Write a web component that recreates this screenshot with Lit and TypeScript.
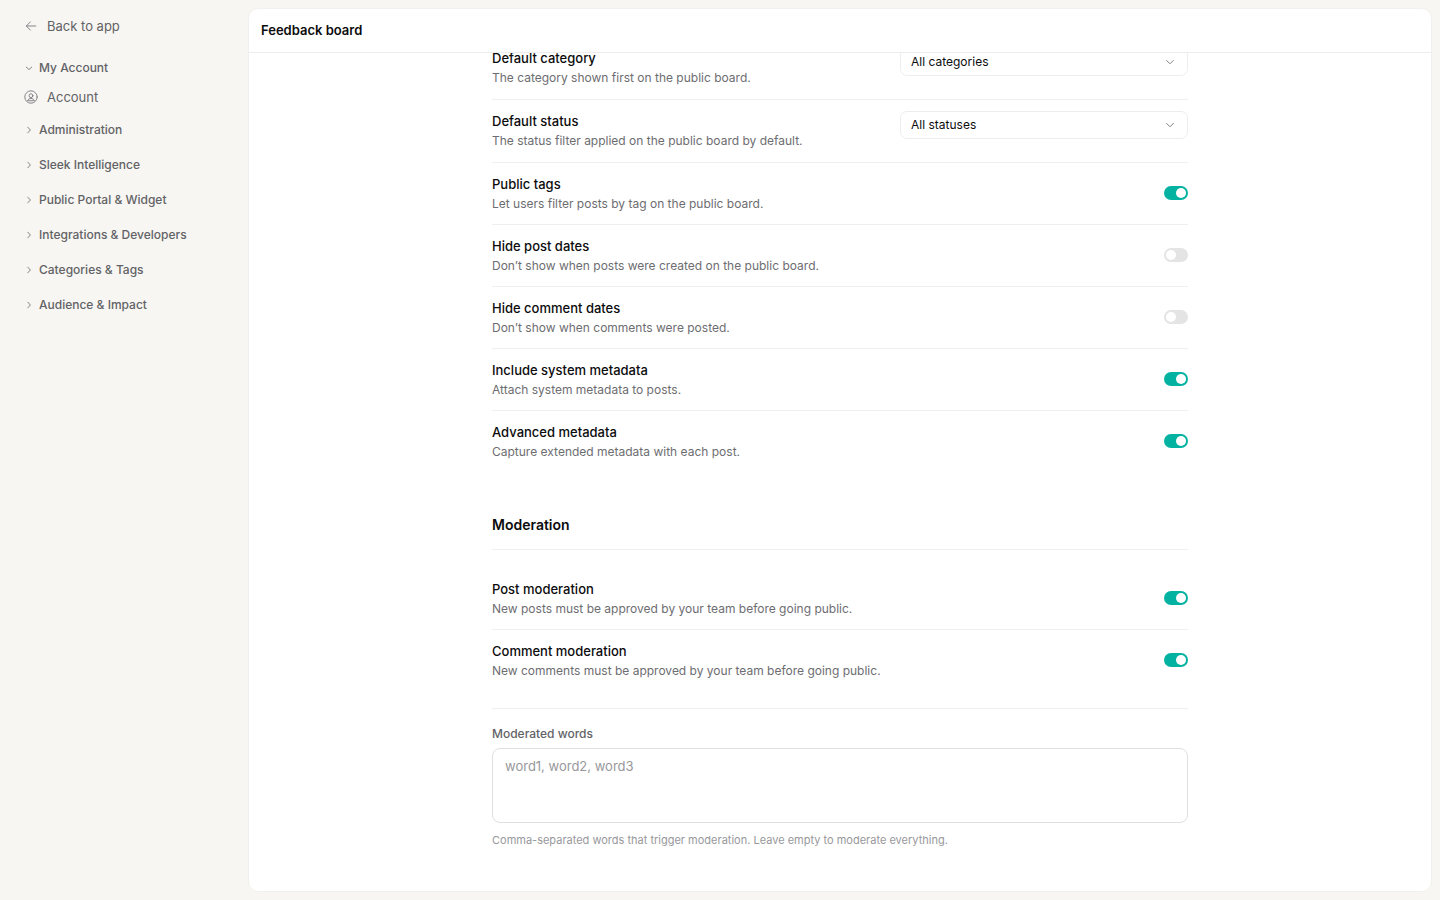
import { LitElement, html, svg, css } from "lit";
import { customElement, property, query } from "lit/decorators.js";

interface Setting {
  id: string;
  title: string;
  description: string;
  on?: boolean;
  option?: string;
}

const boardSettings: Setting[] = [
  { id: "category", title: "Default category", description: "The category shown first on the public board.", option: "All categories" },
  { id: "status", title: "Default status", description: "The status filter applied on the public board by default.", option: "All statuses" },
  { id: "tags", title: "Public tags", description: "Let users filter posts by tag on the public board.", on: true },
  { id: "post-dates", title: "Hide post dates", description: "Don’t show when posts were created on the public board.", on: false },
  { id: "comment-dates", title: "Hide comment dates", description: "Don’t show when comments were posted.", on: false },
  { id: "system-metadata", title: "Include system metadata", description: "Attach system metadata to posts.", on: true },
  { id: "advanced-metadata", title: "Advanced metadata", description: "Capture extended metadata with each post.", on: true },
];

const moderationSettings: Setting[] = [
  { id: "post-moderation", title: "Post moderation", description: "New posts must be approved by your team before going public.", on: true },
  { id: "comment-moderation", title: "Comment moderation", description: "New comments must be approved by your team before going public.", on: true },
];

const navGroups = [
  "Administration",
  "Sleek Intelligence",
  "Public Portal & Widget",
  "Integrations & Developers",
  "Categories & Tags",
  "Audience & Impact",
];

const chevronRight = svg`<path d="M3.8 2.2 6.4 5 3.8 7.8" />`;
const chevronDown = svg`<path d="M2.2 4 5 6.6 7.8 4" />`;

@customElement("settings-nav")
export class SettingsNav extends LitElement {
  static styles = css`
    :host {
      display: block;
      padding: 12px 16px;
      color: #626266;
    }
    .link,
    .group {
      display: flex;
      align-items: center;
      box-sizing: border-box;
      width: 100%;
      border: 0;
      padding: 0 8px;
      background: none;
      font-family: inherit;
      color: inherit;
      text-align: left;
      text-decoration: none;
    }
    .link {
      height: 28px;
      gap: 9px;
      font-size: 13px;
      line-height: 20px;
    }
    .group {
      height: 35px;
      gap: 5px;
      font-size: 12px;
      font-weight: 500;
      line-height: 16px;
    }
    .groups {
      display: flex;
      flex-direction: column;
      margin-top: 12px;
    }
    .group-open {
      height: 31px;
    }
    .items {
      padding-bottom: 1px;
    }
    svg {
      flex: none;
      fill: none;
      stroke: #858589;
      stroke-linecap: round;
      stroke-linejoin: round;
    }
  `;

  render() {
    return html`
      <a class="link" href="#app">
        <svg width="14" height="14" viewBox="0 0 14 14"><path d="M11.8 7H2.4M6.4 2.9 2.3 7l4.1 4.1" /></svg>
        Back to app
      </a>
      <div class="groups">
        <button class="group group-open" aria-expanded="true">
          <svg width="10" height="10" viewBox="0 0 10 10">${chevronDown}</svg>
          My Account
        </button>
        <div class="items">
          <a class="link" href="#account">
            <svg width="14" height="14" viewBox="0 0 14 14">
              <circle cx="7" cy="7" r="6.2" />
              <circle cx="7" cy="5.7" r="1.9" />
              <path d="M3.7 10.4c.6-1.3 1.8-1.9 3.3-1.9s2.7.6 3.3 1.9Z" />
            </svg>
            Account
          </a>
        </div>
        ${navGroups.map(
          (name) => html`
            <button class="group" aria-expanded="false">
              <svg width="10" height="10" viewBox="0 0 10 10">${chevronRight}</svg>
              ${name}
            </button>
          `
        )}
      </div>
    `;
  }
}

@customElement("setting-list")
export class SettingList extends LitElement {
  @property({ attribute: false }) settings: Setting[] = [];

  static styles = css`
    :host {
      display: block;
    }
    .row {
      display: flex;
      align-items: center;
      justify-content: space-between;
      gap: 24px;
      box-sizing: border-box;
      min-height: 62px;
      border-bottom: 1px solid #efefef;
      padding-bottom: 1px;
    }
    .row:last-child {
      border-bottom-color: transparent;
    }
    .row-select {
      align-items: flex-start;
      min-height: 63px;
      padding: 11px 0;
    }
    .text {
      display: flex;
      flex-direction: column;
      gap: 1px;
    }
    .title {
      color: #0c0c0d;
      font-size: 13px;
      font-weight: 500;
      line-height: 20px;
    }
    .description {
      color: #6d6d71;
      font-size: 12px;
      line-height: 18px;
    }
    .switch {
      appearance: none;
      display: flex;
      flex: none;
      box-sizing: border-box;
      width: 24px;
      height: 14px;
      margin: 0;
      padding: 2px;
      border-radius: 7px;
      background: #e4e4e4;
    }
    .switch::before {
      content: "";
      width: 10px;
      height: 10px;
      border-radius: 50%;
      background: #ffffff;
    }
    .switch:checked {
      justify-content: flex-end;
      background: #04b2a2;
    }
    .picker {
      display: grid;
      flex: 0 1 288px;
      align-items: center;
    }
    .picker > * {
      grid-area: 1 / 1;
    }
    .select {
      appearance: none;
      box-sizing: border-box;
      width: 100%;
      height: 28px;
      border: 1px solid #ededed;
      border-radius: 7px;
      padding: 0 32px 0 10px;
      background: #ffffff;
      color: #0c0c0d;
      font-family: inherit;
      font-size: 12px;
      line-height: 18px;
    }
    .chevron {
      justify-self: end;
      margin-right: 13px;
      fill: none;
      stroke: #858589;
      stroke-linecap: round;
      stroke-linejoin: round;
      pointer-events: none;
    }
  `;

  private renderControl(s: Setting) {
    if (s.option) {
      return html`
        <span class="picker">
          <select class="select" id=${s.id}>
            <option>${s.option}</option>
          </select>
          <svg class="chevron" width="10" height="10" viewBox="0 0 10 10"><path d="M1.6 3.4 5 6.8 8.4 3.4" /></svg>
        </span>
      `;
    }
    return html`<input class="switch" type="checkbox" role="switch" id=${s.id} ?checked=${s.on} />`;
  }

  render() {
    return this.settings.map(
      (s) => html`
        <div class=${s.option ? "row row-select" : "row"}>
          <div class="text">
            <label class="title" for=${s.id}>${s.title}</label>
            <span class="description">${s.description}</span>
          </div>
          ${this.renderControl(s)}
        </div>
      `
    );
  }
}

@customElement("app-root")
export class AppRoot extends LitElement {
  @query(".scroller") private scroller!: HTMLElement;

  static styles = css`
    :host {
      display: grid;
      grid-template-columns: 240px minmax(0, 1fr);
      box-sizing: border-box;
      height: 100vh;
      padding-right: 8px;
      background: #f7f6f2;
      font-family: Inter, "Liberation Sans", sans-serif;
    }
    .panel {
      display: flex;
      flex-direction: column;
      min-height: 0;
      margin: 8px 0 8px 8px;
      border: 1px solid #f0f0ed;
      border-radius: 10px;
      background: #ffffff;
      overflow: hidden;
    }
    .header {
      flex: none;
      border-bottom: 1px solid #ededed;
      padding: 11px 12px 12px;
    }
    .page-title {
      margin: 0;
      color: #0c0c0d;
      font-size: 13px;
      font-weight: 600;
      line-height: 20px;
    }
    .scroller {
      flex: 1;
      min-height: 0;
      overflow-y: auto;
      scrollbar-width: none;
    }
    .content {
      display: flex;
      flex-direction: column;
      box-sizing: border-box;
      max-width: 744px;
      margin: 0 auto;
      padding: 0 24px 43px;
    }
    .section-title {
      margin: 41px 0 18px;
      border-bottom: 1px solid #efefef;
      padding-bottom: 13px;
      color: #0c0c0d;
      font-size: 14px;
      font-weight: 600;
      line-height: 22px;
    }
    .field {
      display: flex;
      flex-direction: column;
      margin-top: 16px;
      border-top: 1px solid #efefef;
      padding-top: 16px;
    }
    .field-label {
      color: #626266;
      font-size: 12px;
      font-weight: 500;
      line-height: 18px;
    }
    .words {
      box-sizing: border-box;
      width: 100%;
      height: 75px;
      margin: 5px 0 9px;
      border: 1px solid #dfdfdf;
      border-radius: 8px;
      padding: 7px 12px;
      background: #ffffff;
      color: #0c0c0d;
      font-family: inherit;
      font-size: 13px;
      line-height: 20px;
      resize: none;
    }
    .words::placeholder {
      color: #98989c;
    }
    .hint {
      color: #98989c;
      font-size: 11px;
      line-height: 16px;
    }
  `;

  async firstUpdated() {
    const lists = Array.from(this.renderRoot.querySelectorAll("setting-list")) as SettingList[];
    await Promise.all(lists.map((list) => list.updateComplete));
    this.scroller.scrollTop = this.scroller.scrollHeight;
  }

  render() {
    return html`
      <settings-nav></settings-nav>
      <main class="panel">
        <header class="header"><h1 class="page-title">Feedback board</h1></header>
        <div class="scroller">
          <div class="content">
            <setting-list .settings=${boardSettings}></setting-list>
            <h2 class="section-title">Moderation</h2>
            <setting-list .settings=${moderationSettings}></setting-list>
            <div class="field">
              <label class="field-label" for="words">Moderated words</label>
              <textarea class="words" id="words" placeholder="word1, word2, word3" aria-describedby="words-hint"></textarea>
              <span class="hint" id="words-hint">Comma-separated words that trigger moderation. Leave empty to moderate everything.</span>
            </div>
          </div>
        </div>
      </main>
    `;
  }
}
